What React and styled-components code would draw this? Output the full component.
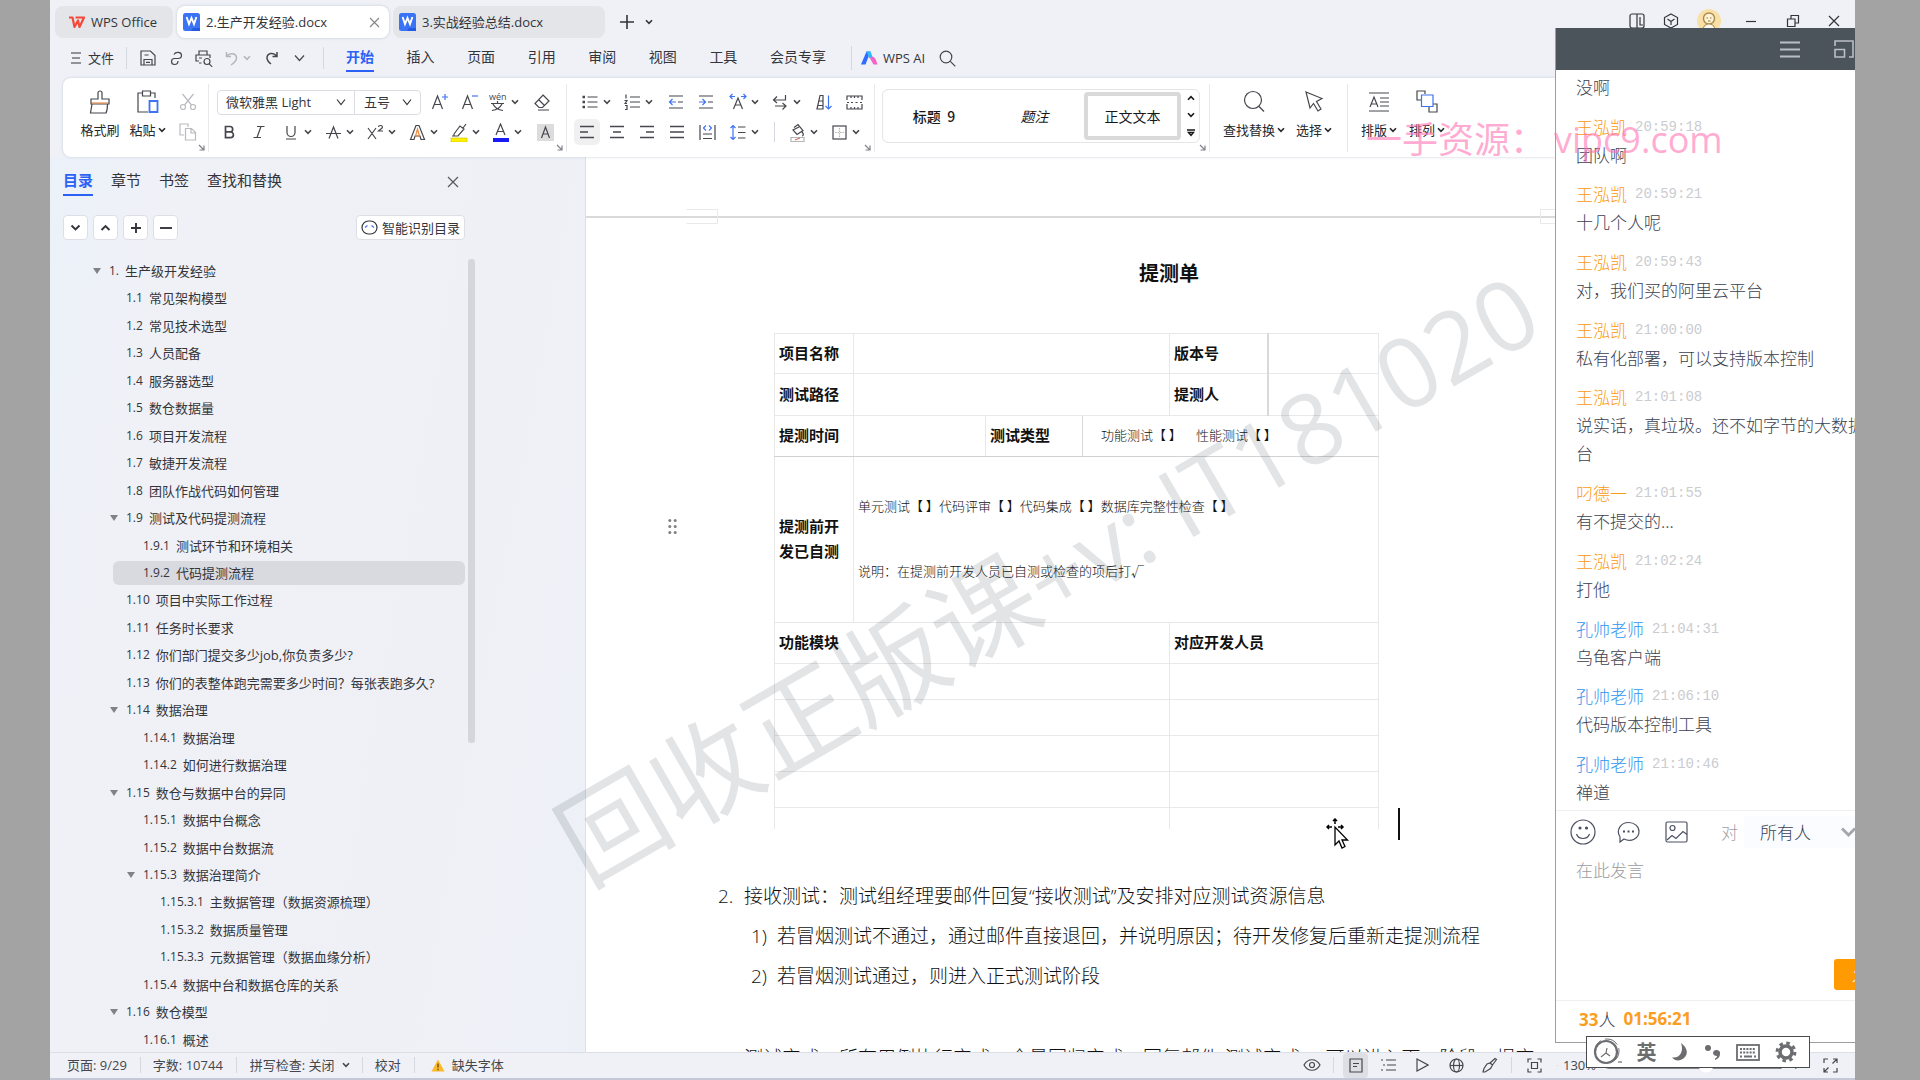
import React from "react";
import styled, { createGlobalStyle, css } from "styled-components";

const UI = `"Open Sans", "Noto Sans CJK SC", sans-serif`;
const CJK = `"Noto Sans CJK SC", sans-serif`;

const Global = createGlobalStyle`
  *, *::before, *::after { box-sizing: border-box; }
  body { margin: 0; background: #a3a3a3; color: #33353b; font: 13px/20px ${UI}; overflow: hidden; }
  button, select, textarea, input { font: inherit; color: inherit; margin: 0; }
  button { background: none; border: 0; padding: 0; }
  ul, ol { list-style: none; margin: 0; padding: 0; }
  svg { display: block; flex: none; }
`;

/* ---------- frame ---------- */
const Frame = styled.div`
  height: 100vh;
  padding: 0 65px 0 50px;
  background: #a3a3a3;
`;
const Window = styled.div`
  position: relative;
  height: 100%;
  display: flex;
  flex-direction: column;
  overflow: hidden;
  background: #eff1f7;
`;

/* ---------- title bar ---------- */
const TitleBar = styled.header`
  display: flex;
  height: 38px;
  padding: 6px 0 0 5px;
  gap: 4px;
`;
const FileTab = styled.button`
  width: ${(p) => p.$w}px;
  height: 32px;
  display: flex;
  align-items: center;
  gap: 6px;
  padding: 0 9px 0 6px;
  border-radius: 8px;
  background: ${(p) => (p.$active ? "#fff" : "#e3e5e9")};
  box-shadow: ${(p) => (p.$active ? "0 0 3px #c3c6d0" : "none")};
  line-height: 24px;
  white-space: nowrap;
  svg:last-child { margin-left: auto; color: #888; }
`;
const HomeTab = styled(FileTab)`
  padding-left: 13px;
  && svg { margin: 0; color: #f5483b; }
`;
const NewTab = styled.div`
  display: flex;
  align-items: center;
  gap: 10px;
  margin-left: 10px;
`;
const WindowControls = styled.div`
  display: flex;
  align-items: center;
  height: 30px;
  margin-left: auto;
`;
const WinBtn = styled.button`
  width: ${(p) => p.$w || 42}px;
  display: flex;
  justify-content: center;
`;

/* ---------- menu bar ---------- */
const MenuBar = styled.div`
  display: flex;
  align-items: center;
  height: 40px;
  padding-left: 18px;
  font-size: 14px;
`;
const QuickBtn = styled.button`
  width: ${(p) => p.$w || 28}px;
  height: 24px;
  display: flex;
  align-items: center;
  justify-content: center;
  gap: 5px;
  color: ${(p) => (p.$dim ? "#b4b6bc" : "#45474d")};
`;
const FileMenu = styled.button`
  display: flex;
  align-items: center;
  gap: 6px;
  width: 58px;
  font-size: 13px;
  padding-left: 2px;
`;
const Rule = styled.i`
  width: 1px;
  height: ${(p) => p.$h || 18}px;
  margin: 0 ${(p) => p.$r ?? 8}px 0 ${(p) => p.$l ?? 0}px;
  background: #d5d8df;
`;
const MenuNav = styled.nav`
  display: flex;
  justify-content: space-between;
  width: 480px;
  margin-left: 22px;
`;
const MenuItem = styled.button`
  height: 28px;
  line-height: 26px;
  border-bottom: 2px solid ${(p) => (p.$active ? "#2b62f5" : "transparent")};
  color: ${(p) => (p.$active ? "#2b62f5" : "inherit")};
  font-weight: ${(p) => (p.$active ? 700 : 400)};
`;
const AiButton = styled.button`
  display: flex;
  align-items: center;
  gap: 5px;
  width: 72px;
  font-size: 13px;
`;

/* ---------- ribbon ---------- */
const Ribbon = styled.section`
  position: relative;
  z-index: 1;
  display: flex;
  flex: none;
  height: 79px;
  margin-left: 13px;
  background: #fff;
  border-radius: 8px 0 0 8px;
  box-shadow: 0 0 3px #c8cbd6;
`;
const Group = styled.div`
  position: relative;
  display: flex;
  margin: 6px 0 5px;
  padding: 3px ${(p) => p.$r || 0}px 0 ${(p) => p.$l || 0}px;
  border-right: ${(p) => (p.$last ? 0 : 1)}px solid #e7e8ec;
`;
const Launcher = styled.button`
  position: absolute;
  right: 3px;
  bottom: 1px;
  color: #808288;
`;
const Rows = styled.div`
  display: flex;
  flex-direction: column;
`;
const Row = styled.div`
  display: flex;
  align-items: center;
  height: 30px;
  padding-left: ${(p) => p.$l || 0}px;
`;
const Tool = styled.button`
  width: 30px;
  height: 26px;
  display: flex;
  align-items: center;
  justify-content: center;
  color: ${(p) => (p.$dim ? "#b9bbc0" : "#45474d")};
  ${(p) => p.$on && css`width: 26px; margin: 0 2px; border-radius: 5px; background: #f0f0f0;`}
`;
const DropTool = styled.button`
  width: 42px;
  height: 26px;
  display: flex;
  align-items: center;
  padding-right: 8px;
  color: #45474d;
  & > svg:first-child { margin: 0 auto; }
`;
const BigTool = styled.button`
  width: ${(p) => p.$w}px;
  display: flex;
  flex-direction: column;
  align-items: center;
  color: #45474d;
  & > svg { margin: 2px 0 1px; }
  span { display: flex; align-items: center; gap: 2px; height: 28px; color: #26282c; }
`;
const FontBoxes = styled.div`
  display: flex;
  width: 204px;
  height: 25px;
  margin: 0 4px 0 3px;
  border: 1px solid #dcdde2;
  border-radius: 4px;
`;
const Picker = styled.label`
  display: flex;
  align-items: center;
  flex: ${(p) => (p.$grow ? "1" : "none")};
  width: ${(p) => p.$w || "auto"};
  border-left: ${(p) => (p.$line ? 1 : 0)}px solid #dcdde2;
  select {
    flex: 1;
    min-width: 0;
    height: 22px;
    line-height: 20px;
    padding: 0 0 0 ${(p) => p.$pad || 8}px;
    border: 0;
    background: none;
    appearance: none;
    outline: 0;
  }
  svg { margin-right: 8px; pointer-events: none; }
`;
const Gallery = styled.div`
  display: flex;
  align-items: center;
  width: 318px;
  height: 54px;
  margin-top: 2px;
  border: 1px solid #e4e5e9;
  border-radius: 6px;
  color: #17181b;
`;
const StyleCard = styled.button`
  width: ${(p) => p.$w}px;
  height: 48px;
  border: ${(p) => (p.$on ? "4px solid #d9d9d9" : "0")};
  border-radius: 4px;
  font-size: 14px;
  font-family: ${CJK};
  font-style: ${(p) => (p.$italic ? "italic" : "normal")};
  font-weight: ${(p) => (p.$medium ? 500 : 400)};
`;
const Scrollers = styled.div`
  display: flex;
  flex-direction: column;
  justify-content: space-between;
  height: 42px;
  margin-left: 6px;
`;

/* ---------- body ---------- */
const Body = styled.div`
  flex: 1;
  min-height: 0;
  display: flex;
`;
const Side = styled.aside`
  flex: none;
  width: 536px;
  display: flex;
  flex-direction: column;
  padding: 10px 110px 0 0;
  border-right: 1px solid #dcdfe6;
  background: linear-gradient(100deg, #ecf1f9 0%, #f0f1f6 25%, #eff0f6 70%, #edf1f7 100%);
`;
const SideTabs = styled.div`
  display: flex;
  gap: 18px;
  height: 29px;
  padding: 0 16px 0 13px;
  font-size: 15px;
`;
const SideTab = styled.button`
  line-height: 27px;
  border-bottom: 2px solid ${(p) => (p.$on ? "#2b62f5" : "transparent")};
  color: ${(p) => (p.$on ? "#2b62f5" : "inherit")};
  font-weight: ${(p) => (p.$on ? 700 : 400)};
`;
const SideClose = styled.button`
  margin-left: auto;
  color: #55575c;
`;
const SideTools = styled.div`
  display: flex;
  gap: 5px;
  margin: 19px 0;
  padding: 0 10px 0 13px;
`;
const Chip = styled.button`
  width: ${(p) => (p.$wide ? 109 : 25)}px;
  height: 25px;
  display: flex;
  align-items: center;
  justify-content: center;
  gap: 4px;
  margin-left: ${(p) => (p.$wide ? "auto" : 0)};
  border: 1px solid #dedfe5;
  border-radius: 4px;
  background: #fff;
  white-space: nowrap;
`;
const Outline = styled.div`
  flex: 1;
  min-height: 0;
  display: flex;
  gap: 3px;
`;
const OutlineList = styled.ul`
  flex: 1;
  display: flex;
  flex-direction: column;
  justify-content: space-between;
`;
const OutlineItem = styled.li`
  display: flex;
  align-items: center;
  height: 24px;
  margin-left: ${(p) => 29 + 17 * p.$level}px;
  padding-left: 9px;
  border-radius: 6px;
  white-space: nowrap;
  background: ${(p) => (p.$on ? "#d9dae0" : "transparent")};
  a { display: flex; gap: 6px; color: #33353b; text-decoration: none; }
  b { font-weight: 400; font-size: 12px; }
`;
const Fold = styled.span`
  width: 21px;
  padding-left: 5px;
  color: #808288;
`;
const ScrollThumb = styled.div`
  width: 7px;
  height: 61%;
  border-radius: 3px;
  background: #d5d6db;
`;

/* ---------- document ---------- */
const Doc = styled.main`
  flex: 1;
  min-width: 0;
  overflow: hidden;
  background: #fff;
  color: #111;
`;
const PageGap = styled.div`
  position: relative;
  height: 61px;
  border-bottom: 2px solid #dadada;
`;
const HeaderMark = styled.i`
  position: absolute;
  left: ${(p) => p.$x}px;
  bottom: -8px;
  width: 32px;
  height: 15px;
  border: 1px solid #e9e9e9;
  border-left-color: ${(p) => (p.$open ? "transparent" : "#e9e9e9")};
`;
const Page = styled.article`
  width: 822px;
  margin-left: 132px;
  padding-top: 35px;
`;
const DocTitle = styled.h1`
  margin: 0 0 40px 421px;
  font: 700 20px/40px ${CJK};
`;
const Sheet = styled.div`
  position: relative;
  width: 604px;
  margin: 0 0 47px 56px;
`;
const Handle = styled.button`
  position: absolute;
  left: -106px;
  top: 186px;
  color: #808080;
`;
const Caret = styled.i`
  position: absolute;
  left: 624px;
  bottom: -11px;
  width: 2px;
  height: 32px;
  background: #111;
`;
const Pointer = styled.span`
  position: absolute;
  left: 552px;
  bottom: -21px;
`;
const Table = styled.table`
  width: 100%;
  table-layout: fixed;
  border-collapse: collapse;
  font: 300 13px/65px ${CJK};
  border-top: 1px solid #e4e4e4;
  td, th { padding: 0 4px 3px; text-align: left; border: 1px solid #e8e8e8; vertical-align: middle; white-space: nowrap; }
  th { font-weight: 700; font-size: 15px; line-height: 25px; white-space: normal; }
  tr:last-child td { border-bottom: 0; }
`;
const Tr = styled.tr`
  height: ${(p) => p.$h}px;
  && > * { border-bottom-color: ${(p) => (p.$strong ? "#d2d2d2" : "#e8e8e8")}; }
`;
const Edged = styled.th`
  &&&& { border-right: ${(p) => p.$edge}px solid #d9d9d9; }
`;
const Checks = styled.div`
  display: flex;
  gap: ${(p) => p.$gap || 0}px;
  padding-left: ${(p) => p.$l || 0}px;
  line-height: ${(p) => p.$lh}px;
`;
const Steps = styled.ol`
  font-size: 19px;
  font-weight: 300;
  line-height: 40px;
  white-space: nowrap;
`;
const Step = styled.li`
  display: flex;
  margin-top: ${(p) => p.$top || 0}px;
  padding-left: ${(p) => (p.$sub ? 33 : 0)}px;
  span { width: 26px; }
`;

/* ---------- watermarks ---------- */
const Watermark = styled.div`
  position: absolute;
  left: 997px;
  top: 576px;
  transform: translate(-50%, -50%) rotate(-30deg);
  font-size: 107px;
  line-height: 120px;
  white-space: pre;
  color: rgba(50, 62, 75, 0.14);
  pointer-events: none;
  z-index: 2;
  span { font-size: 98px; }
`;
const PinkMark = styled.div`
  position: absolute;
  left: 1316px;
  top: 116px;
  display: flex;
  gap: 8px;
  font-size: 36px;
  line-height: 48px;
  white-space: nowrap;
  color: rgba(255, 115, 180, 0.6);
  pointer-events: none;
  z-index: 5;
`;

/* ---------- status bar ---------- */
const StatusBar = styled.footer`
  flex: none;
  display: flex;
  align-items: center;
  height: 28px;
  padding: 0 12px 1px 17px;
  border-top: 1px solid #dcdfe6;
  border-bottom: 2px solid #c5c9d7;
  color: #45474d;
`;
const StatusItem = styled.button`
  display: flex;
  align-items: center;
  gap: 7px;
  height: 22px;
  white-space: nowrap;
`;
const ViewBtn = styled.button`
  width: ${(p) => p.$w || 34}px;
  height: 25px;
  display: flex;
  align-items: center;
  justify-content: center;
  border-radius: 4px;
`;
const PageView = styled(ViewBtn)`
  width: 25px;
  margin-right: 3px;
  background: #dedfe4;
`;
const ViewTools = styled.div`
  display: flex;
  align-items: center;
  margin-left: auto;
`;
const Zoom = styled.label`
  display: flex;
  align-items: center;
  gap: 8px;
  width: 254px;
  input { width: 180px; height: 14px; accent-color: #fff; }
`;

/* ---------- chat window ---------- */
const Chat = styled.section`
  position: absolute;
  z-index: 3;
  top: 28px;
  right: 0;
  bottom: 37px;
  width: 300px;
  display: flex;
  flex-direction: column;
  overflow: hidden;
  background: #fff;
  border-left: 1px solid #9c9ea1;
  border-bottom: 1px solid #9c9ea1;
  color: #3b4150;
  font: 300 17px/28px ${CJK};
`;
const ChatHead = styled.div`
  flex: none;
  display: flex;
  align-items: center;
  justify-content: flex-end;
  gap: 34px;
  height: 42px;
  margin-left: -1px;
  background: #4c545b;
  color: #b9bfc5;
`;
const Messages = styled.ul`
  flex: 1;
  min-height: 0;
  width: 330px;
  display: flex;
  flex-direction: column;
  justify-content: space-between;
  padding: 3px 0 4px 20px;
`;
const Message = styled.li`
  p { margin: 0; width: 308px; }
`;
const Meta = styled.div`
  display: flex;
  gap: 8px;
  color: ${(p) => (p.$teacher ? "#2f95ef" : "#fb9a16")};
  time { font: 14px/28px "Liberation Mono", monospace; color: #cbccd0; }
`;
const ChatTools = styled.div`
  flex: none;
  display: flex;
  align-items: center;
  width: 318px;
  height: 46px;
  padding: 0 0 3px 14px;
  border-top: 1px solid #eef0f4;
`;
const ChatIcon = styled.button`
  width: ${(p) => p.$w}px;
  color: #4b5160;
`;
const ToLabel = styled.span`
  width: 23px;
  color: #9fa1a5;
`;
const ChatPicker = styled(Picker)`
  width: 112px;
  height: 32px;
  background: #fafcff;
  select { height: 28px; line-height: 26px; }
  svg { color: #a3a7ad; margin-right: 0; }
`;
const Draft = styled.textarea`
  flex: none;
  height: 98px;
  padding: 0 20px;
  border: 0;
  resize: none;
  outline: 0;
  background: none;
  &::placeholder { color: #9a9ca0; opacity: 1; }
`;
const SendRow = styled.div`
  flex: none;
  width: 350px;
  display: flex;
  padding: 5px 0 10px 278px;
`;
const Send = styled.button`
  width: 70px;
  height: 31px;
  border-radius: 3px;
  background: #ff9b00;
  color: #fff;
`;
const ChatFoot = styled.div`
  flex: none;
  height: 42px;
  display: flex;
  gap: 8px;
  padding-left: 23px;
  line-height: 36px;
  border-top: 1px solid #eef0f4;
  b { font: 700 17px/36px "Open Sans", sans-serif; color: #fb9d1e; }
`;

const ImeBar = styled.div`
  position: absolute;
  z-index: 4;
  right: 45px;
  bottom: 12px;
  width: 224px;
  height: 32px;
  display: flex;
  align-items: center;
  justify-content: space-between;
  padding: 0 12px 0 5px;
  border: 1px solid #4a4a4a;
  background: #fff;
  color: #6b6d70;
  b { font: 700 20px/28px ${CJK}; }
`;

/* ---------- icons ---------- */
const Svg = ({ w = 18, h = w, children, ...rest }) => (
  <svg width={w} height={h} viewBox={`0 0 ${w} ${h}`} fill="none" stroke="currentColor" strokeWidth="1.2" aria-hidden="true" {...rest}>
    {children}
  </svg>
);
const Caret8 = () => <Svg w={8} h={6} strokeWidth="1.6"><path d="M1 1.2 4 4.4 7 1.2" /></Svg>;
const Chev = ({ w = 12 }) => <Svg w={w} h={8}><path d={`M1 1.5 ${w / 2} 6.5 ${w - 1} 1.5`} /></Svg>;
const Cross = ({ s = 12 }) => <Svg w={s}><path d={`M1 1 ${s - 1} ${s - 1}M${s - 1} 1 1 ${s - 1}`} /></Svg>;
const Corner = () => <Svg w={7}><path d="M1 1 6 6M6 1.5V6H1.5" /></Svg>;
const BLUE = "#3f73f5";

const WLogo = () => (
  <Svg w={17} h={18} stroke="none">
    <rect width="17" height="18" rx="2.5" fill="#3a73f6" />
    <path d="M8 18h9v-3h-7z" fill="#235be0" />
    <path d="M3.600 4 6 11 8.500 5 11 11 13.400 4" stroke="#fff" strokeWidth="1.900" />
  </Svg>
);
const WpsLogo = () => (
  <Svg w={17} h={13} strokeWidth="2.2"><path d="M1 1.5h3.5L6.5 11 10 4.5 11.5 11 16 1.5H7.5" strokeLinejoin="round" /></Svg>
);
const lines = (rows) => <Svg w={14} h={14} strokeWidth="1.4"><path d={rows} /></Svg>;
const LAYOUT = {
  left: lines("M0 1.5h14M0 7h8M0 12.5h14"),
  center: lines("M0 1.5h14M3 7h8M0 12.5h14"),
  right: lines("M0 1.5h14M6 7h8M0 12.5h14"),
  full: lines("M0 1.5h14M0 7h14M0 12.5h14"),
};

const TOC = [
  [0, "1.", "生产级开发经验", 1],
  [1, "1.1", "常见架构模型"],
  [1, "1.2", "常见技术选型"],
  [1, "1.3", "人员配备"],
  [1, "1.4", "服务器选型"],
  [1, "1.5", "数仓数据量"],
  [1, "1.6", "项目开发流程"],
  [1, "1.7", "敏捷开发流程"],
  [1, "1.8", "团队作战代码如何管理"],
  [1, "1.9", "测试及代码提测流程", 1],
  [2, "1.9.1", "测试环节和环境相关"],
  [2, "1.9.2", "代码提测流程"],
  [1, "1.10", "项目中实际工作过程"],
  [1, "1.11", "任务时长要求"],
  [1, "1.12", "你们部门提交多少job,你负责多少?"],
  [1, "1.13", "你们的表整体跑完需要多少时间？每张表跑多久?"],
  [1, "1.14", "数据治理", 1],
  [2, "1.14.1", "数据治理"],
  [2, "1.14.2", "如何进行数据治理"],
  [1, "1.15", "数仓与数据中台的异同", 1],
  [2, "1.15.1", "数据中台概念"],
  [2, "1.15.2", "数据中台数据流"],
  [2, "1.15.3", "数据治理简介", 1],
  [3, "1.15.3.1", "主数据管理（数据资源梳理）"],
  [3, "1.15.3.2", "数据质量管理"],
  [3, "1.15.3.3", "元数据管理（数据血缘分析）"],
  [2, "1.15.4", "数据中台和数据仓库的关系"],
  [1, "1.16", "数仓模型", 1],
  [2, "1.16.1", "概述"],
];

const CHAT = [
  ["", "", "没啊"],
  ["王泓凯", "20:59:18", "团队啊"],
  ["王泓凯", "20:59:21", "十几个人呢"],
  ["王泓凯", "20:59:43", "对，我们买的阿里云平台"],
  ["王泓凯", "21:00:00", "私有化部署，可以支持版本控制"],
  ["王泓凯", "21:01:08", "说实话，真垃圾。还不如字节的大数据平台"],
  ["叼德一", "21:01:55", "有不提交的..."],
  ["王泓凯", "21:02:24", "打他"],
  ["孔帅老师", "21:04:31", "乌龟客户端"],
  ["孔帅老师", "21:06:10", "代码版本控制工具"],
  ["孔帅老师", "21:10:46", "禅道"],
];

function Title() {
  return (
    <TitleBar>
      <HomeTab $w={118}><WpsLogo />WPS Office</HomeTab>
      <FileTab $w={212} $active><WLogo />2.生产开发经验.docx<Cross s={11} /></FileTab>
      <FileTab $w={212}><WLogo />3.实战经验总结.docx<span /></FileTab>
      <NewTab>
        <button aria-label="新建"><Svg w={16} strokeWidth="1.6"><path d="M8 1v14M1 8h14" /></Svg></button>
        <Caret8 />
      </NewTab>
      <WindowControls>
        <WinBtn $w={34} aria-label="侧栏"><Svg w={16}><rect x="1" y="1" width="14" height="14" rx="2" /><path d="M8 1v14M11 4v8h3" /></Svg></WinBtn>
        <WinBtn $w={34} aria-label="应用"><Svg w={16}><path d="M8 1 14.5 4.5v7L8 15 1.5 11.5v-7zM4.5 6 8 8.5 11.5 6M8 8.5V12" /></Svg></WinBtn>
        <WinBtn $w={41} aria-label="账户">
          <Svg w={24} stroke="none">
            <circle cx="12" cy="12" r="12" fill="#f9e0a6" />
            <circle cx="12" cy="9.500" r="5.500" fill="#fff3d6" stroke="#a98a4e" strokeWidth="1.400" />
            <path d="M6 22c0-5 3-7 6-7s6 2 6 7" fill="#fffaf0" stroke="#b79655" />
            <path d="M9.500 9h1.400M13 9h1.400M11 12h2.400" stroke="#8d6f35" />
          </Svg>
        </WinBtn>
        <WinBtn $w={44} aria-label="最小化"><Svg w={12}><path d="M1 6.500h10" /></Svg></WinBtn>
        <WinBtn $w={40} aria-label="还原"><Svg w={14}><path d="M1.500 5h7.500v7.500H1.500zM5 5V1.500h7.500V9H9" /></Svg></WinBtn>
        <WinBtn $w={42} aria-label="关闭"><Cross s={12} /></WinBtn>
      </WindowControls>
    </TitleBar>
  );
}

function Menu() {
  const items = ["开始", "插入", "页面", "引用", "审阅", "视图", "工具", "会员专享"];
  return (
    <MenuBar>
      <FileMenu><Svg w={12} h={14}><path d="M1 2h10M2 7h8M1 12h10" /></Svg>文件</FileMenu>
      <Rule $r={7} $h={22} />
      <QuickBtn aria-label="保存"><Svg w={16}><path d="M1 1h9.500L15 5.500V15H1zM4 15V9.500h8V15M4.500 5h4M6 12.300h4" /></Svg></QuickBtn>
      <QuickBtn aria-label="链接"><Svg w={13} h={15}><path d="M4 3.500C5.500.500 11.500.500 11.500 4.500 11.500 6.500 10 7.500 8 7.500H4.500c-4 0-4 6 0 6 2.500 0 3.500-1.500 3.500-3.500" /></Svg></QuickBtn>
      <QuickBtn aria-label="打印预览"><Svg w={18} h={17}><path d="M4 5V1h8v4M6.500 13H4M4 11H1V5h14v3M4 8h3" /><circle cx="12" cy="11.500" r="3" /><path d="m14.200 13.800 3 3" /></Svg></QuickBtn>
      <QuickBtn $w={39} $dim aria-label="撤销"><Svg w={13} h={15} strokeWidth="1.500"><path d="M1.500 1v4.500H6M1.800 5.300C5 1 11.500 2.500 11.500 7 11.500 10 9 12 6 14" /></Svg><Caret8 /></QuickBtn>
      <QuickBtn $w={28} aria-label="恢复"><Svg w={13} h={14} strokeWidth="1.500"><path d="M12 1v4.500H7.500M11.500 5C8.500.800 2 2 2 7c0 2.500 1.500 4 4 6" /></Svg></QuickBtn>
      <QuickBtn aria-label="更多"><Chev w={11} /></QuickBtn>
      <Rule $r={0} $l={10} $h={22} />
      <MenuNav>
        {items.map((t, i) => <MenuItem key={t} $active={i === 0}>{t}</MenuItem>)}
      </MenuNav>
      <Rule $r={9} $l={25} $h={24} />
      <AiButton>
        <Svg w={17} h={14} stroke="none"><path d="M0 13.500 5.500.500h4L4.500 13.500z" fill="#2f6bff" /><path d="M5.500.500h4L12 7H8z" fill="#31b8f5" /><path d="M10.500 5.500c3.500 0 4.500 3 6 8h-4l-3.500-6z" fill="#f562c8" /></Svg>
        WPS AI
      </AiButton>
      <QuickBtn aria-label="搜索"><Svg w={17}><circle cx="7" cy="7" r="5.800" /><path d="m11.300 11.300 5 5" /></Svg></QuickBtn>
    </MenuBar>
  );
}

const Drop = ({ label, children }) => <DropTool aria-label={label}>{children}<Caret8 /></DropTool>;
const T = ({ x, y, s, children, ...r }) => (
  <text x={x} y={y} fontSize={s} fill="currentColor" stroke="none" fontFamily="Open Sans, Noto Sans CJK SC, sans-serif" {...r}>{children}</text>
);

function RibbonBar() {
  return (
    <Ribbon>
      <Group $l={15} $r={5}>
        <BigTool $w={44}><Svg w={22} h={26}><path d="M9 10V4a2 2 0 0 1 4 0v6h7v5H2v-5zM3 15 1.500 24H17c1-2 1.500-5 1.500-9" /><path d="M3 14h16" stroke="#e78c4a" /></Svg><span>格式刷</span></BigTool>
        <BigTool $w={51}><Svg w={22} h={26}><path d="M5 4H1v19h10M14 4h4v5M5.500 2h8v5h-8z" /><path d="M12.500 12h8v11h-8z" stroke={BLUE} strokeWidth="1.800" /></Svg><span>粘贴<Caret8 /></span></BigTool>
        <Rows>
          <Row><Tool $dim aria-label="剪切"><Svg w={18}><circle cx="4" cy="14" r="2.500" /><circle cx="14" cy="14" r="2.500" /><path d="M3.500 1 12.500 12M14.500 1 5.500 12" /></Svg></Tool></Row>
          <Row><Tool $dim aria-label="复制"><Svg w={18}><path d="M5 12H1V1h8v3M6.500 5.500h6l4 4V17h-10zM12 5.500V10h4.500" /></Svg></Tool></Row>
        </Rows>
        <Launcher aria-label="剪贴板设置"><Corner /></Launcher>
      </Group>
      <Group $l={5} $r={6}>
        <Rows>
          <Row>
            <FontBoxes>
              <Picker $grow><select aria-label="字体"><option>微软雅黑 Light</option></select><Chev w={10} /></Picker>
              <Picker $line $w="66px" $pad={9}><select aria-label="字号"><option>五号</option></select><Chev w={10} /></Picker>
            </FontBoxes>
            <Tool aria-label="增大字号"><Svg w={18}><path d="M1.500 16 6.500 3l5 13M3.500 11.500h6" /><path d="M11 4h6M14 1v6" stroke={BLUE} /></Svg></Tool>
            <Tool aria-label="减小字号"><Svg w={18}><path d="M1.500 16 6.500 3l5 13M3.500 11.500h6" /><path d="M11 3h6" stroke={BLUE} /></Svg></Tool>
            <Drop label="拼音指南"><Svg w={20}><T x={1} y={8} s={9}>wén</T><path d="M3 11.500h13M9.500 9v2M5 12c2 4 6 6 10 6.500M14 12c-2 4-6 6-10 6.500" /></Svg></Drop>
            <Tool aria-label="清除格式"><Svg w={18}><path d="M10 2 16 8 9.500 14.500H6L2 10.500zM5.500 6.500l6 6M5 17h11" /></Svg></Tool>
          </Row>
          <Row>
            <Tool aria-label="加粗"><Svg w={12} h={14} strokeWidth="1.700"><path d="M2.500 1.500H7a2.700 2.700 0 0 1 0 5.400H2.500zM2.500 6.900h5a2.900 2.900 0 0 1 0 5.800h-5z" /></Svg></Tool>
            <Tool aria-label="斜体"><Svg w={12} h={14}><path d="M4 1.500h7.500M.500 12.500H8M8 1.500 4 12.500" /></Svg></Tool>
            <Row $l={4} />
            <Drop label="下划线"><Svg w={12} h={15}><path d="M2 1v6.500a4 4 0 0 0 8 0V1M1 14h10" /></Svg></Drop>
            <Drop label="删除线"><Svg w={15}><path d="M0 8.500h15M3 13.500 7.500 2 12 13.500" /></Svg></Drop>
            <Drop label="上标"><Svg w={17}><path d="M1 4 9 15M9 4 1 15M11.500 3c0-2 4-2 4 0 0 1.500-2.500 2.500-4 4h4.500" /></Svg></Drop>
            <Drop label="文字效果"><Svg w={17}><path d="M1.500 15.500 7 1.500h3l5.500 14h-3.500L11 12H6l-1 3.500z" /><path d="M8.500 5 6.500 12h4z" stroke="#ef8b3d" /></Svg></Drop>
            <Drop label="突出显示"><Svg w={18} h={19}><path d="M4 11 10 3l4 3-6 7H4zM13 5l3-4M2 13h4" /><rect x="1" y="15" width="16" height="4" fill="#fff200" stroke="#c9bd00" strokeWidth=".6" /></Svg></Drop>
            <Drop label="字体颜色"><Svg w={18} h={19}><path d="M4 12 8.500 1 13 12M5.500 8.500h6" /><rect x="1" y="15" width="16" height="4" fill="#1a1af5" stroke="none" /></Svg></Drop>
            <Tool aria-label="字符底纹"><Svg w={17}><rect width="17" height="17" fill="#dcdcdc" stroke="none" /><path d="M4.500 14 8.500 3l4 11M6 10h5" /></Svg></Tool>
          </Row>
        </Rows>
        <Launcher aria-label="字体设置"><Corner /></Launcher>
      </Group>
      <Group $l={5} $r={5}>
        <Rows>
          <Row $l={5}>
            <Drop label="项目符号"><Svg w={16}><path d="M5.500 3h10M5.500 8h10M5.500 13h10" /><path d="M.500 3h2.500M.500 8h2.500M.500 13h2.500" strokeWidth="2.500" /></Svg></Drop>
            <Drop label="编号"><Svg w={16}><path d="M6 3h10M6 8h10M6 13h10M2 .500V4.500M.500 6.500H3L1 9.500h2M1 11.500h2v4H1" /></Svg></Drop>
            <Tool aria-label="减少缩进"><Svg w={16}><path d="M1 2h14M1 14h14M10 8h5" /><path d="M8 8H1.500M4.500 5l-3 3 3 3" stroke={BLUE} /></Svg></Tool>
            <Tool aria-label="增加缩进"><Svg w={16}><path d="M1 2h14M1 14h14M10 8h5" /><path d="M1 8h6.500M4.500 5l3 3-3 3" stroke={BLUE} /></Svg></Tool>
            <Row $l={4} />
            <Drop label="字符缩放"><Svg w={18}><path d="M4.500 16 9 5l4.500 11M6 12h6" /><path d="M6 3.500H1M12 3.500h5M3.500 1 1 3.500 3.500 6M14.500 1 17 3.500 14.500 6" stroke={BLUE} /></Svg></Drop>
            <Drop label="换行"><Svg w={16}><path d="M13.500 1v5H2M5 2.500 1.500 6 5 9M3 12h10.500M10.500 9l3.500 3-3.500 3.500" /></Svg></Drop>
            <Tool aria-label="排序"><Svg w={17}><path d="M1 15 4 1.500h3V15zM2 11.500h5M3 7h4" /><path d="M12.500 1.500V15M9.500 12l3 3 3-3" stroke={BLUE} /></Svg></Tool>
            <Tool aria-label="制表位"><Svg w={17} h={15}><path d="M1 5V1h15v4M1 9v5h15V9M1 7.500h2M5 7.500h2M9.500 7.500h2M14 7.500h2M5 1v2M8.500 1v2M12 1v2M5 14v-2M8.500 14v-2M12 14v-2" /></Svg></Tool>
          </Row>
          <Row>
            <Tool $on aria-label="左对齐">{LAYOUT.left}</Tool>
            <Tool aria-label="居中">{LAYOUT.center}</Tool>
            <Tool aria-label="右对齐">{LAYOUT.right}</Tool>
            <Tool aria-label="两端对齐">{LAYOUT.full}</Tool>
            <Tool aria-label="分散对齐"><Svg w={17}><path d="M1 1v15M16 1v15M4 10h9M4 14.500h9" /><path d="M7 1.500 4.500 4 7 6.500M10 1.500 12.500 4 10 6.500" stroke={BLUE} /></Svg></Tool>
            <Row $l={3} />
            <Drop label="行距"><Svg w={16} h={17}><path d="M8 3h7.500M8 8.500h7.500M8 14h7.500" /><path d="M3 1.500v14M.500 4 3 1.500 5.500 4M.500 13 3 15.500 5.500 13" stroke={BLUE} /></Svg></Drop>
            <Rule $l={7} $r={9} $h={20} />
            <Drop label="底纹"><Svg w={17} h={19}><path d="M5 4.500 9 1.500l5 6-6 4-4-4.500 6-3M13 9c2 2 1.500 4 0 4" /><path d="M2 14.500h13v4H2z" stroke="#b5b5b5" /><path d="m6 17 5-2" stroke="#d57070" /></Svg></Drop>
            <Drop label="边框"><Svg w={15}><rect x="1" y="1" width="13" height="13" /><path d="M7.500 3v9M3 7.500h9" stroke="#b5b5b5" strokeDasharray="1.500 1" /></Svg></Drop>
          </Row>
        </Rows>
        <Launcher aria-label="段落设置"><Corner /></Launcher>
      </Group>
      <Group $l={7} $r={9}>
        <Gallery>
          <StyleCard $w={102} $medium>标题&nbsp; 9</StyleCard>
          <StyleCard $w={99} $italic>题注</StyleCard>
          <StyleCard $w={97} $on>正文文本</StyleCard>
          <Scrollers>
            <button aria-label="上一行"><Svg w={8} h={6} strokeWidth="1.600"><path d="M1 4.800 4 1.600 7 4.800" /></Svg></button>
            <button aria-label="下一行"><Caret8 /></button>
            <button aria-label="展开"><Svg w={8} h={8} strokeWidth="1.400"><path d="M0 1h8M1.500 3.500 4 6.500 6.500 3.500z" /></Svg></button>
          </Scrollers>
        </Gallery>
        <Launcher aria-label="样式设置"><Corner /></Launcher>
      </Group>
      <Group $l={9} $r={8}>
        <BigTool $w={70}><Svg w={24} h={26}><circle cx="11" cy="11" r="8.500" /><path d="m17 17.500 5 5" /></Svg><span>查找替换<Caret8 /></span></BigTool>
        <BigTool $w={50}><Svg w={22} h={26}><path d="M3 3 19 9.500 13.500 12.500 18 20l-3 2-4.500-7.500L7 19z" /></Svg><span>选择<Caret8 /></span></BigTool>
      </Group>
      <Group $l={6} $last>
        <BigTool $w={50}><Svg w={24} h={26}><path d="M2 4h20M2 22h20M13 9h9M13 13h9M13 17h9M3 18 7 8l4 10M4.500 15h5" /></Svg><span>排版<Caret8 /></span></BigTool>
        <BigTool $w={46}><Svg w={22} h={26}><path d="M6 11H1V2h8v3M13 18v5h8v-8h-4" /><path d="M5.500 6h11.500v11.500H5.500z" stroke={BLUE} /></Svg><span>排列<Caret8 /></span></BigTool>
      </Group>
    </Ribbon>
  );
}

function SidePanel() {
  return (
    <Side>
      <SideTabs>
        {["目录", "章节", "书签", "查找和替换"].map((t, i) => <SideTab key={t} $on={i === 0}>{t}</SideTab>)}
        <SideClose aria-label="关闭目录"><Cross s={12} /></SideClose>
      </SideTabs>
      <SideTools>
        <Chip aria-label="展开"><Svg w={11} h={8} strokeWidth="1.900"><path d="M1.500 1.500 5.500 5.500 9.500 1.500" /></Svg></Chip>
        <Chip aria-label="收起"><Svg w={11} h={8} strokeWidth="1.900"><path d="M1.500 6 5.500 2 9.500 6" /></Svg></Chip>
        <Chip aria-label="增加级别"><Svg w={12} strokeWidth="1.900"><path d="M6 1v10M1 6h10" /></Svg></Chip>
        <Chip aria-label="减少级别"><Svg w={14} strokeWidth="1.900"><path d="M1 7h12" /></Svg></Chip>
        <Chip $wide><Svg w={17} h={15}><rect x="1" y="1" width="15" height="13" rx="6.500" /><path d="M4 7.500 6.500 5.500M13 7.500 10.500 5.500" stroke={BLUE} /></Svg>智能识别目录</Chip>
      </SideTools>
      <Outline>
        <OutlineList>
          {TOC.map(([level, no, text, fold]) => (
            <OutlineItem key={no} $level={level} $on={no === "1.9.2"}>
              <Fold>{fold ? <Svg w={8} h={6} fill="currentColor" stroke="none"><path d="M0 0h8L4 6z" /></Svg> : null}</Fold>
              <a href={`#s${no}`}><b>{no}</b>{text}</a>
            </OutlineItem>
          ))}
        </OutlineList>
        <ScrollThumb />
      </Outline>
    </Side>
  );
}

function Document() {
  return (
    <Doc>
      <PageGap><HeaderMark $x={100} $open /><HeaderMark $x={954} /></PageGap>
      <Page>
        <DocTitle>提测单</DocTitle>
        <Sheet>
          <Table>
            <colgroup>
              {[79, 132, 97, 87, 98, 111].map((w) => <col key={w} width={w} />)}
            </colgroup>
            <tbody>
              <Tr $h={40}><th>项目名称</th><td colSpan={3} /><Edged $edge={2}>版本号</Edged><td /></Tr>
              <Tr $h={42}><th>测试路径</th><td colSpan={3} /><Edged $edge={2}>提测人</Edged><td /></Tr>
              <Tr $h={41} $strong>
                <th>提测时间</th><td /><Edged $edge={1}>测试类型</Edged>
                <td colSpan={3}><Checks $gap={14} $l={14} $lh={24}><span>功能测试【 】</span><span>性能测试【 】</span></Checks></td>
              </Tr>
              <Tr $h={166}>
                <th>提测前开发已自测</th>
                <td colSpan={5}>
                  <Checks $lh={65}><span>单元测试【 】</span><span>代码评审【 】</span><span>代码集成【 】</span><span>数据库完整性检查【 】</span></Checks>
                  说明：在提测前开发人员已自测或检查的项后打√
                </td>
              </Tr>
              <Tr $h={41}><th colSpan={4}>功能模块</th><th colSpan={2}>对应开发人员</th></Tr>
              {[36, 36, 36, 36, 21].map((h, i) => <Tr key={i} $h={h}><td colSpan={4} /><td colSpan={2} /></Tr>)}
            </tbody>
          </Table>
          <Handle aria-label="移动表格"><Svg w={9} h={15} stroke="none" fill="currentColor">{[1.5, 7.5, 13.5].map((y) => <React.Fragment key={y}><circle cx="1.800" cy={y} r="1.500" /><circle cx="7.200" cy={y} r="1.500" /></React.Fragment>)}</Svg></Handle>
          <Caret />
          <Pointer>
            <Svg w={24} h={32} stroke="#000">
              <path d="M9 1v5M1 9h5M12 9h5M7 3l2-2 2 2M3 7 1 9l2 2M15 7l2 2-2 2" strokeWidth="1.500" />
              <path d="M9 9v18l4-4 3 7 3-1.500-3-6.500h5.500z" fill="#fff" strokeWidth="1.300" />
            </Svg>
          </Pointer>
        </Sheet>
        <Steps>
          <Step><span>2.</span>接收测试：测试组经理要邮件回复“接收测试”及安排对应测试资源信息</Step>
          <Step $sub><span>1)</span>若冒烟测试不通过，通过邮件直接退回，并说明原因；待开发修复后重新走提测流程</Step>
          <Step $sub><span>2)</span>若冒烟测试通过，则进入正式测试阶段</Step>
          <Step $top={42}><span>3.</span>测试完成：所有用例执行完成，全量回归完成，回复邮件“测试完成”，可以进入下一阶段，提交</Step>
        </Steps>
      </Page>
    </Doc>
  );
}

function Status() {
  return (
    <StatusBar>
      <StatusItem>页面: 9/29</StatusItem>
      <Rule $l={13} $r={12} $h={16} />
      <StatusItem>字数: 10744</StatusItem>
      <Rule $l={13} $r={13} $h={16} />
      <StatusItem>拼写检查: 关闭<Caret8 /></StatusItem>
      <Rule $l={12} $r={12} $h={16} />
      <StatusItem>校对</StatusItem>
      <Rule $l={13} $r={16} $h={16} />
      <StatusItem><Svg w={14} h={13} stroke="none"><path d="M7 .500 13.500 12.500H.500z" fill="#fbb829" /><path d="M7 4.500v4M7 9.800v1.400" stroke="#6b4a00" strokeWidth="1.300" /></Svg>缺失字体</StatusItem>
      <ViewTools>
        <ViewBtn aria-label="护眼"><Svg w={18} h={14}><path d="M1 7c4-7 12-7 16 0-4 7-12 7-16 0z" /><circle cx="9" cy="7" r="2.500" /></Svg></ViewBtn>
        <Rule $l={4} $r={9} $h={16} />
        <PageView aria-label="页面视图"><Svg w={14} h={15}><path d="M1 1h12v13H1zM4 5.500h6M4 8.500h4" /></Svg></PageView>
        <ViewBtn aria-label="大纲"><Svg w={15}><path d="M5 2h10M6 7h9M5 12h10M0 2h2M2 7h2M0 12h2" /></Svg></ViewBtn>
        <ViewBtn aria-label="阅读"><Svg w={14}><path d="M2 1 13 7 2 13z" /></Svg></ViewBtn>
        <ViewBtn aria-label="网页"><Svg w={15}><circle cx="7.500" cy="7.500" r="6.500" /><ellipse cx="7.500" cy="7.500" rx="3" ry="6.500" /><path d="M1 7.500h13" /></Svg></ViewBtn>
        <ViewBtn aria-label="写作"><Svg w={16}><path d="M8 6 13 1.500l1.500 1L10.500 8zM8 6l2.500 2-2 3.500L3 15l-2 0 1-3.500L5 7z" /></Svg></ViewBtn>
        <Rule $l={4} $r={5} $h={16} />
        <ViewBtn aria-label="适应窗口"><Svg w={15}><path d="M1 4.500V1h3.500M10.500 1H14v3.500M14 10.500V14h-3.500M4.500 14H1v-3.500M4.500 4.500h6v6h-6z" /></Svg></ViewBtn>
        <Rule $l={6} $r={5} $h={1} />
        <Zoom>130%<input type="range" aria-label="缩放" min="10" max="220" defaultValue="130" />+</Zoom>
        <ViewBtn $w={26} aria-label="全屏"><Svg w={15}><path d="M1 5V1h4M14 10v4h-4M1 10v4h4M14 5V1h-4M14 1 9.500 5.500M1 14l4.500-4.500" /></Svg></ViewBtn>
      </ViewTools>
    </StatusBar>
  );
}

function ChatWindow() {
  return (
    <Chat>
      <ChatHead>
        <button aria-label="菜单"><Svg w={20} h={17} strokeWidth="2"><path d="M0 1.500h20M0 8.500h20M0 15.500h20" /></Svg></button>
        <button aria-label="缩放窗口"><Svg w={21} h={18} strokeWidth="1.600"><path d="M1 6V1h18v16h-4M1 9.500h9.500V17H1z" /></Svg></button>
      </ChatHead>
      <Messages>
        {CHAT.map(([who, time, text]) => (
          <Message key={time}>
            {who && <Meta $teacher={who === "孔帅老师"}>{who}<time>{time}</time></Meta>}
            <p>{text}</p>
          </Message>
        ))}
      </Messages>
      <ChatTools>
        <ChatIcon $w={47} aria-label="表情"><Svg w={26}><circle cx="13" cy="13" r="12" /><path d="M6.500 15c2 6 11 6 13 0" /><circle cx="10" cy="9" r="1" fill="currentColor" /><circle cx="16.500" cy="9" r="1" fill="currentColor" /></Svg></ChatIcon>
        <ChatIcon $w={48} aria-label="快捷语"><Svg w={23}><path d="M3 21v-5C-1.500 9 4 1.500 11.500 1.500c6 0 10.500 4 10.500 9 0 7-8 11-15 7.500z" /><path d="M6 10.500h2M10.500 10.500h2M15 10.500h2" strokeWidth="2" /></Svg></ChatIcon>
        <ChatIcon $w={56} aria-label="图片"><Svg w={23} h={22}><rect x="1" y="1" width="21" height="20" rx="1.500" /><circle cx="7.500" cy="7" r="2.500" /><path d="m2 19 5-4.500 4 3 7-7 4 3" /></Svg></ChatIcon>
        <ToLabel>对</ToLabel>
        <ChatPicker $pad={16}><select aria-label="发送对象"><option>所有人</option></select><Svg w={15} h={10} strokeWidth="2.800"><path d="M1 1.500 7.500 8 14 1.500" /></Svg></ChatPicker>
      </ChatTools>
      <Draft aria-label="发言内容" placeholder="在此发言" />
      <SendRow><Send>发送</Send></SendRow>
      <ChatFoot><span><b>33</b>人</span><b>01:56:21</b></ChatFoot>
    </Chat>
  );
}

function Ime() {
  return (
    <ImeBar>
      <Svg w={30} h={28}>
        <circle cx="14" cy="14" r="11" strokeWidth="2.200" /><circle cx="15" cy="13" r="12" strokeWidth="1" strokeDasharray="14 4" />
        <path d="m9 19 5-4 1-5M14 15l4 3" /><path d="M26 24h4" />
      </Svg>
      <b>英</b>
      <Svg w={18} h={20} stroke="none"><path d="M10 1c6 4 8 11 3 15-4 3.500-9 3-12-.500 8 1 12-6 9-14.500z" fill="currentColor" /></Svg>
      <Svg w={18} h={18} stroke="none" fill="currentColor"><circle cx="4" cy="5" r="3" /><path d="M9 10a3.500 3.500 0 1 1 7 1c0 3-2 5-5 6v-1.500c1.500-.500 2-1.500 2-2.500-2 0-4-1-4-3z" /></Svg>
      <Svg w={24} h={17}><rect x="1" y="1" width="22" height="15" strokeWidth="1.800" /><path d="M4 5h16M4 8.500h16" strokeWidth="2" strokeDasharray="2 1.200" /><path d="M4 12.500h2M8 12.500h8M18 12.500h2" strokeWidth="2" /></Svg>
      <Svg w={22}><circle cx="11" cy="11" r="6" strokeWidth="3.500" /><circle cx="11" cy="11" r="8.900" strokeWidth="3" strokeDasharray="3.500 3.490" /></Svg>
    </ImeBar>
  );
}

export default function App() {
  return (
    <Frame lang="zh-CN">
      <Global />
      <Window>
        <Title />
        <Menu />
        <RibbonBar />
        <Body>
          <SidePanel />
          <Document />
        </Body>
        <Status />
        <Watermark>回收正版课<span>+v: IT181020</span></Watermark>
        <ChatWindow />
        <Ime />
        <PinkMark><span>一手资源：</span><span>vipc9.com</span></PinkMark>
      </Window>
    </Frame>
  );
}
